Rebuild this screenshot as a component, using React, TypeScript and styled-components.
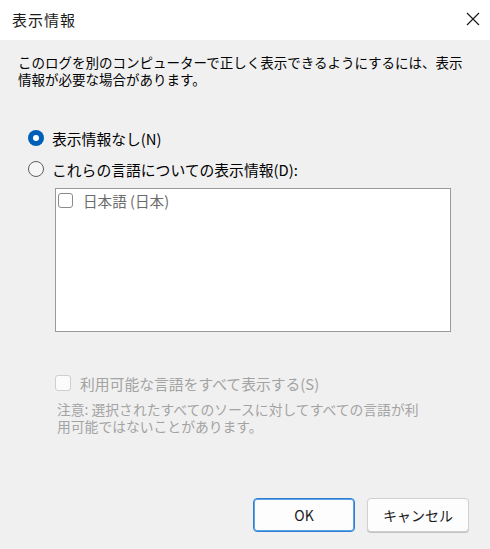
import React from "react";
import styled, { createGlobalStyle } from "styled-components";

const Global = createGlobalStyle`
  html, body { margin: 0; padding: 0; background: #f0f0f0; }
  body { font-family: "Noto Sans CJK JP", "Noto Sans", sans-serif; }
  * { box-sizing: border-box; }
`;

const Dialog = styled.div`
  width: 490px;
  height: 549px;
  display: flex;
  flex-direction: column;
  background: #f0f0f0;
  color: #000;
`;

const TitleBar = styled.div`
  height: 40px;
  background: #ffffff;
  display: flex;
  align-items: center;
  justify-content: space-between;
  padding: 0 7px 0 12px;
`;

const Title = styled.div`
  font-size: 15px;
  color: #1b1b1b;
  letter-spacing: 1px;
  margin-top: -2px;
`;

const CloseButton = styled.div`
  width: 20px;
  height: 20px;
  display: flex;
  align-items: center;
  justify-content: center;
  margin-top: -3px;
`;

const Body = styled.div`
  flex: 1;
  display: flex;
  flex-direction: column;
  padding: 14px 21px 17px 18px;
`;

const Description = styled.div`
  font-size: 13.5px;
  line-height: 17px;
  color: #000;
`;

const Options = styled.div`
  display: flex;
  flex-direction: column;
  gap: 13px;
  margin-top: 41px;
  padding-left: 10px;
`;

const RadioRow = styled.div`
  display: flex;
  align-items: center;
  gap: 8px;
  height: 18px;
  font-size: 14.8px;
`;

const RadioCircle = styled.span<{ $checked?: boolean }>`
  width: 16px;
  height: 16px;
  border-radius: 50%;
  flex: none;
  display: flex;
  align-items: center;
  justify-content: center;
  background: ${(p) => (p.$checked ? "#005fb8" : "#f6f6f6")};
  border: ${(p) => (p.$checked ? "none" : "1px solid #5f5f5f")};
  &::after {
    content: "";
    display: ${(p) => (p.$checked ? "block" : "none")};
    width: 6px;
    height: 6px;
    border-radius: 50%;
    background: #ffffff;
  }
`;

const ListBox = styled.div`
  margin: 10px 0 0 37px;
  width: 396px;
  height: 144px;
  background: #ffffff;
  border: 1px solid #9a9a9a;
  padding: 3px 2px;
`;

const ListItem = styled.div`
  display: flex;
  align-items: center;
  gap: 10px;
  height: 16px;
  font-size: 14.6px;
  color: #6b6b6b;
`;

const CheckBox = styled.span<{ $disabled?: boolean }>`
  width: ${(p) => (p.$disabled ? 16 : 15)}px;
  height: ${(p) => (p.$disabled ? 16 : 15)}px;
  flex: none;
  border-radius: 3px;
  border: 1px solid ${(p) => (p.$disabled ? "#cfcfcf" : "#8a8a8a")};
  background: ${(p) => (p.$disabled ? "#fbfbfb" : "#ffffff")};
`;

const DisabledCheckRow = styled.div`
  display: flex;
  align-items: center;
  gap: 9px;
  margin: 42px 0 0 37px;
  height: 18px;
  font-size: 14.8px;
  color: #a3a3a3;
`;

const Note = styled.div`
  margin: 9px 0 0 39px;
  font-size: 13.8px;
  line-height: 17px;
  color: #a3a3a3;
`;

const ButtonRow = styled.div`
  margin-top: auto;
  display: flex;
  justify-content: flex-end;
  gap: 12px;
`;

const Button = styled.button<{ $primary?: boolean }>`
  width: 102px;
  height: 34px;
  border-radius: 4px;
  background: #fdfdfd;
  border: 1px solid ${(p) => (p.$primary ? "#2d7fd2" : "#d0d0d0")};
  box-shadow: ${(p) => (p.$primary ? "inset 0 0 0 1px #5fa2e6" : "0 1px 0 #c2c2c2")};
  font-family: "Noto Sans CJK JP", "Noto Sans", sans-serif;
  font-size: 14px;
  color: #1b1b1b;
  padding: 0;
`;

export default function App() {
  return (
    <>
      <Global />
      <Dialog>
        <TitleBar>
          <Title>表示情報</Title>
          <CloseButton>
            <svg width="14" height="14" viewBox="0 0 14 14">
              <path d="M1 1 L13 13 M13 1 L1 13" stroke="#1b1b1b" strokeWidth="1.2" fill="none" />
            </svg>
          </CloseButton>
        </TitleBar>
        <Body>
          <Description>
            このログを別のコンピューターで正しく表示できるようにするには、表示
            <br />
            情報が必要な場合があります。
          </Description>
          <Options>
            <RadioRow>
              <RadioCircle $checked />
              <span>表示情報なし(N)</span>
            </RadioRow>
            <RadioRow>
              <RadioCircle />
              <span>これらの言語についての表示情報(D):</span>
            </RadioRow>
          </Options>
          <ListBox>
            <ListItem>
              <CheckBox />
              <span>日本語 (日本)</span>
            </ListItem>
          </ListBox>
          <DisabledCheckRow>
            <CheckBox $disabled />
            <span>利用可能な言語をすべて表示する(S)</span>
          </DisabledCheckRow>
          <Note>
            注意: 選択されたすべてのソースに対してすべての言語が利
            <br />
            用可能ではないことがあります。
          </Note>
          <ButtonRow>
            <Button $primary>OK</Button>
            <Button>キャンセル</Button>
          </ButtonRow>
        </Body>
      </Dialog>
    </>
  );
}
